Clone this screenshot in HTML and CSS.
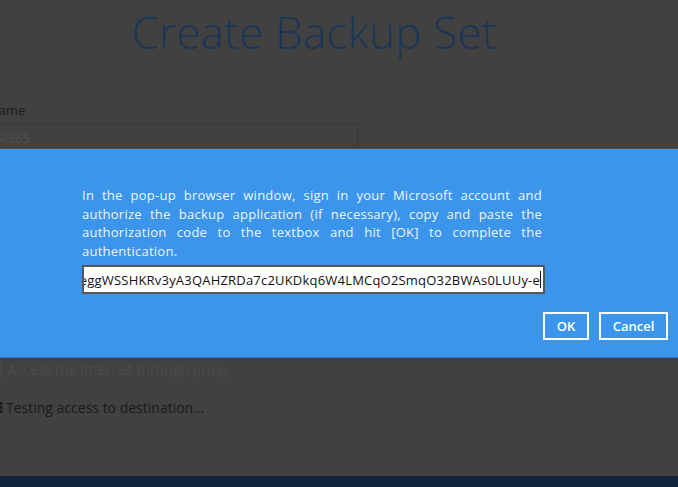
FILE: index.html
```html
<!DOCTYPE html>
<html>
<head>
<meta charset="utf-8">
<link rel="stylesheet" href="styles.css">
</head>
<body>
<div class="page">
  <h1 class="title">Create Backup Set</h1>
  <div class="form">
    <div class="label">Name</div>
    <div class="field">M365</div>
    <div class="proxy-row">
      <span class="checkbox"></span>
      <span class="proxy-text">Access the Internet through proxy</span>
    </div>
    <div class="status-row">
      <span class="spinner">&#8285;</span>
      <span class="status-text">Testing access to destination...</span>
    </div>
  </div>
  <div class="footer"></div>
</div>
<div class="modal">
  <div class="modal-body">
    <p class="msg">In the pop-up browser window, sign in your Microsoft account and authorize the backup application (if necessary), copy and paste the authorization code to the textbox and hit [OK] to complete the authentication.</p>
    <div class="code-input"><span class="code-text">M.C507_BAY.2.U.4c1f1e2a-7fweggWSSHKRv3yA3QAHZRDa7c2UKDkq6W4LMCqO2SmqO32BWAs0LUUy-e</span><span class="caret"></span></div>
  </div>
  <div class="actions">
    <button class="btn btn-ok">OK</button>
    <button class="btn btn-cancel">Cancel</button>
  </div>
</div>
</body>
</html>
```

FILE: styles.css
```css
html, body {
  margin: 0;
  padding: 0;
}
body {
  width: 678px;
  height: 487px;
  overflow: hidden;
  background: #414141;
  font-family: "Open Sans", "DejaVu Sans", sans-serif;
  position: relative;
}
.page {
  height: 487px;
  display: flex;
  flex-direction: column;
}
.title {
  margin: 4px 0 0 0;
  text-align: center;
  font-weight: 300;
  font-size: 44px;
  line-height: 56px;
  color: #1b3656;
  letter-spacing: 0.2px;
  padding-right: 50px;
}
.form {
  margin-top: 42px;
  margin-left: -10px;
  display: flex;
  flex-direction: column;
}
.label {
  font-size: 13px;
  line-height: 16px;
  color: #1c1c1c;
  text-indent: -1px;
}
.field {
  margin-top: 5px;
  width: 384px;
  height: 30px;
  margin-left: -16px;
  padding-left: 21px;
  box-sizing: border-box;
  border: 1px solid #383838;
  font-size: 13px;
  line-height: 28px;
  color: #4f4f4f;
}
.proxy-row {
  margin-top: 207px;
  display: flex;
  align-items: center;
  gap: 6px;
  height: 18px;
}
.checkbox {
  width: 12px;
  height: 13px;
  border: 1px solid #4c4c4c;
  margin-left: -2px;
}
.proxy-text {
  font-size: 14px;
  color: #4b4b4b;
}
.status-row {
  margin-top: 19px;
  display: flex;
  align-items: center;
  gap: 2px;
  margin-left: 8px;
}
.spinner {
  font-size: 15px;
  font-weight: bold;
  color: #1a1a1a;
  width: 6px;
  text-align: center;
}
.status-text {
  font-size: 14px;
  color: #1a1a1a;
}
.footer {
  margin-top: auto;
  height: 11px;
  background: #10243e;
}
.modal {
  position: absolute;
  left: 0;
  top: 148px;
  width: 678px;
  height: 210px;
  box-sizing: border-box;
  background: #3b95ea;
  border-top: 1px solid #5b4736;
  border-bottom: 1px solid #3278c0;
  display: flex;
  flex-direction: column;
}
.modal-body {
  margin-left: 82px;
  width: 463px;
  padding-top: 37px;
}
.msg {
  margin: 0;
  width: 460px;
  font-size: 13px;
  line-height: 18.5px;
  color: #eef4fc;
  text-align: justify;
  letter-spacing: 0.25px;
}
.code-input {
  margin-top: 5px;
  height: 29px;
  box-sizing: border-box;
  border: 2px solid #575757;
  background: #ffffff;
  display: flex;
  justify-content: flex-end;
  align-items: center;
  overflow: hidden;
  padding-right: 2px;
}
.code-text {
  white-space: nowrap;
  font-size: 13px;
  letter-spacing: 0.2px;
  color: #111111;
  flex-shrink: 0;
}
.caret {
  width: 1px;
  height: 17px;
  background: #111;
  flex-shrink: 0;
}
.actions {
  display: flex;
  justify-content: flex-end;
  gap: 10px;
  margin-top: 18px;
  padding-right: 10px;
}
.btn {
  height: 28px;
  box-sizing: border-box;
  background: transparent;
  border: 2px solid #ffffff;
  color: #ffffff;
  font-family: "Open Sans", "DejaVu Sans", sans-serif;
  font-size: 13px;
  font-weight: 600;
  padding: 0;
  cursor: pointer;
}
.btn-ok {
  width: 46px;
}
.btn-cancel {
  width: 69px;
}
```
